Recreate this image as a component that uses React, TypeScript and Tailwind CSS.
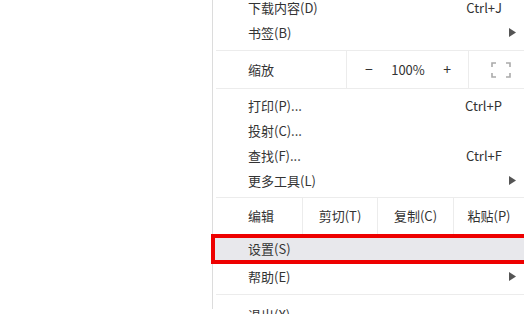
const font = { fontFamily: '"Noto Sans CJK SC", "Microsoft YaHei", sans-serif' };

function Arrow() {
  return (
    <svg className="w-[7px] h-[9px]" viewBox="0 0 7 9">
      <path d="M0 0 L7 4.5 L0 9 Z" fill="#555" />
    </svg>
  );
}

function Item({ label, shortcut, sub }: { label: string; shortcut?: string; sub?: boolean }) {
  return (
    <div className="h-[25px] flex items-center pl-[35px] pr-[22px]">
      <span className="flex-1">{label}</span>
      {shortcut && <span>{shortcut}</span>}
      {sub && <span className="-mr-[14px]"><Arrow /></span>}
    </div>
  );
}

function Sep() {
  return <div className="h-px bg-[#ececec] ml-[3px]" />;
}

export default function App() {
  return (
    <div className="w-[524px] h-[314px] overflow-hidden bg-white text-[13px] text-[#333]" style={font}>
      <div className="ml-[212px] h-full border-l border-[#dcdcdc] bg-white">
        <div className="-mt-[5px]">
          <Item label="下载内容(D)" shortcut="Ctrl+J" />
          <Item label="书签(B)" sub />
          <div className="h-[5px]" />
          <Sep />
          <div className="h-[37px] flex items-center">
            <span className="w-[133px] pl-[35px]">缩放</span>
            <div className="w-[123px] h-full flex items-center justify-between border-l border-r border-[#ececec] pl-[18px] pr-[17px]">
              <span className="text-[14px]">−</span>
              <span>100%</span>
              <span className="text-[14px]">+</span>
            </div>
            <div className="flex-1 flex justify-center">
              <svg className="w-[20px] h-[16px] ml-[8px]" viewBox="0 0 20 16" fill="none" stroke="#aaa" strokeWidth="1.6">
                <path d="M1 5 V1 H5 M15 1 H19 V5 M19 11 V15 H15 M5 15 H1 V11" />
              </svg>
            </div>
          </div>
          <Sep />
          <div className="h-[4px]" />
          <Item label="打印(P)..." shortcut="Ctrl+P" />
          <Item label="投射(C)..." />
          <Item label="查找(F)..." shortcut="Ctrl+F" />
          <Item label="更多工具(L)" sub />
          <div className="h-[4px]" />
          <Sep />
          <div className="h-[36px] flex items-center">
            <span className="w-[89px] pl-[35px]">编辑</span>
            <div className="w-[75px] h-full flex items-center justify-center border-l border-[#ececec]">剪切(T)</div>
            <div className="w-[76px] h-full flex items-center justify-center border-l border-[#ececec]">复制(C)</div>
            <div className="flex-1 h-full flex items-center justify-center border-l border-[#ececec]">粘贴(P)</div>
          </div>
          <div className="-ml-[2px] h-[30px] border-[4px] border-r-0 border-[#ee0000] bg-[#e8e8ec] flex items-center pl-[33px]">
            设置(S)
          </div>
          <Item label="帮助(E)" sub />
          <div className="h-[5px]" />
          <Sep />
          <div className="h-[7px]" />
          <Item label="退出(X)" />
        </div>
      </div>
    </div>
  );
}
